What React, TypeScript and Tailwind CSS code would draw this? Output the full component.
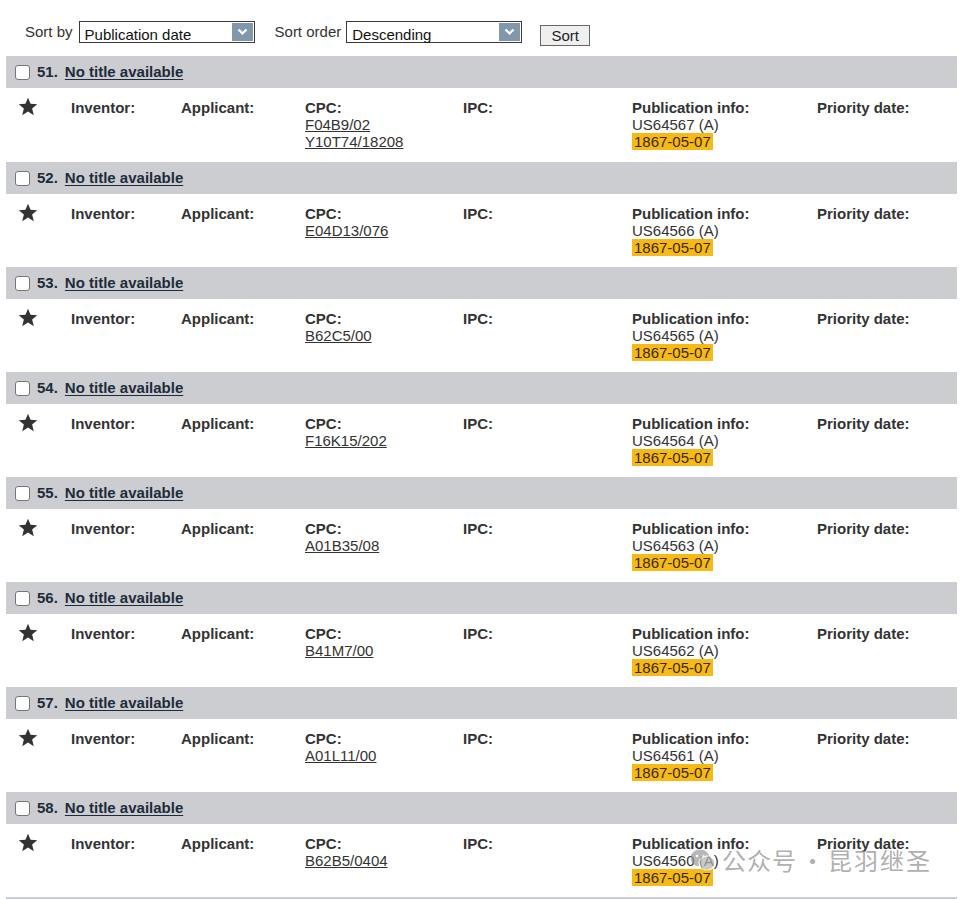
import React from 'react';

const RECORDS = [
  { no: 51, cpc: ['F04B9/02', 'Y10T74/18208'], pub: 'US64567 (A)' },
  { no: 52, cpc: ['E04D13/076'], pub: 'US64566 (A)' },
  { no: 53, cpc: ['B62C5/00'], pub: 'US64565 (A)' },
  { no: 54, cpc: ['F16K15/202'], pub: 'US64564 (A)' },
  { no: 55, cpc: ['A01B35/08'], pub: 'US64563 (A)' },
  { no: 56, cpc: ['B41M7/00'], pub: 'US64562 (A)' },
  { no: 57, cpc: ['A01L11/00'], pub: 'US64561 (A)' },
  { no: 58, cpc: ['B62B5/0404'], pub: 'US64560 (A)' },
];

function FakeSelect({ value }: { value: string }) {
  return (
    <div className="flex h-[22px] w-[176px] items-stretch border border-[#3a3a3a] bg-white p-[1px]">
      <div className="flex-1 pl-[4px] pt-[3px] text-[15px] leading-[17px] text-[#111]">{value}</div>
      <div className="flex w-[21px] items-center justify-center bg-[#8097ac]">
        <svg width="11" height="8" viewBox="0 0 11 8">
          <path d="M1.5 1.5 L5.5 5.5 L9.5 1.5" fill="none" stroke="#fff" strokeWidth="2.2" />
        </svg>
      </div>
    </div>
  );
}

function Star() {
  return (
    <svg width="20" height="19" viewBox="0 0 24 23">
      <path
        d="M12 0.8 L15.1 8.2 L23.2 8.8 L17 14 L19 22 L12 17.7 L5 22 L7 14 L0.8 8.8 L8.9 8.2 Z"
        fill="#333"
      />
    </svg>
  );
}

function Record({ no, cpc, pub, first }: { no: number; cpc: string[]; pub: string; first?: boolean }) {
  return (
    <div>
      <div className="flex h-[32px] items-center bg-[#cbcdd0] pl-[9px]">
        <span className="mr-[7px] h-[15px] w-[15px] rounded-[3px] border border-[#767676] bg-white" />
        <span className="font-bold text-[#1e2b3a]">{no}.</span>
        <a className="ml-[7px] font-bold text-[#1e2b3a] underline underline-offset-2">No title available</a>
      </div>
      <div className={`flex pl-[12px] pt-[11px] leading-[17px] text-[#333] ${first ? 'h-[74px]' : 'h-[73px]'}`}>
        <div className="w-[53px] -mt-[2px]">
          <Star />
        </div>
        <div className="w-[110px] font-bold">Inventor:</div>
        <div className="w-[124px] font-bold">Applicant:</div>
        <div className="w-[158px]">
          <div className="font-bold">CPC:</div>
          {cpc.map((c) => (
            <div key={c} className="underline underline-offset-1">{c}</div>
          ))}
        </div>
        <div className="w-[169px] font-bold">IPC:</div>
        <div className="w-[185px]">
          <div className="font-bold">Publication info:</div>
          <div>{pub}</div>
          <div className="inline-block bg-[#f6b915] px-[2px] text-[#3a2a00]">1867-05-07</div>
        </div>
        <div className="font-bold">Priority date:</div>
      </div>
    </div>
  );
}

export default function App() {
  return (
    <div className="relative h-[899px] overflow-hidden bg-white text-[15px] text-[#333]" style={{ fontFamily: '"Liberation Sans", Arial, sans-serif' }}>
      <div className="flex h-[56px] items-start pl-[25px] pt-[21px]">
        <span className="mt-[2px] mr-[6px] leading-[17px]">Sort by</span>
        <FakeSelect value="Publication date" />
        <span className="mt-[2px] ml-[20px] mr-[5px] leading-[17px]">Sort order</span>
        <FakeSelect value="Descending" />
        <button className="ml-[18px] mt-[4px] h-[21px] w-[50px] border border-[#666] bg-[#efefef] text-[15px] leading-[17px] text-[#222]">
          Sort
        </button>
      </div>

      <div className="ml-[6px] mr-[5px]">
        {RECORDS.map((r, i) => (
          <Record key={r.no} {...r} first={i === 0} />
        ))}
        <div className="h-[3px] bg-[#cbcdd0]" />
      </div>

      {/* watermark */}
      <div
        className="pointer-events-none absolute left-[690px] top-[845px] flex items-center text-[24px] leading-[30px] text-[#9a9a9a]/80"
        style={{ fontFamily: '"Noto Sans CJK SC", sans-serif' }}
      >
        <svg width="26" height="24" viewBox="0 0 26 24" className="mr-[6px] opacity-70">
          <ellipse cx="10" cy="10" rx="9.5" ry="8.5" fill="#9a9a9a" />
          <ellipse cx="17" cy="15" rx="8" ry="7" fill="#b5b5b5" stroke="#fff" strokeWidth="1.2" />
          <circle cx="7" cy="8" r="1.3" fill="#fff" />
          <circle cx="13" cy="8" r="1.3" fill="#fff" />
        </svg>
        <span className="tracking-[1px]">公众号</span>
        <span className="w-[31px] text-center">·</span>
        <span className="tracking-[2px]">昆羽继圣</span>
      </div>
    </div>
  );
}
